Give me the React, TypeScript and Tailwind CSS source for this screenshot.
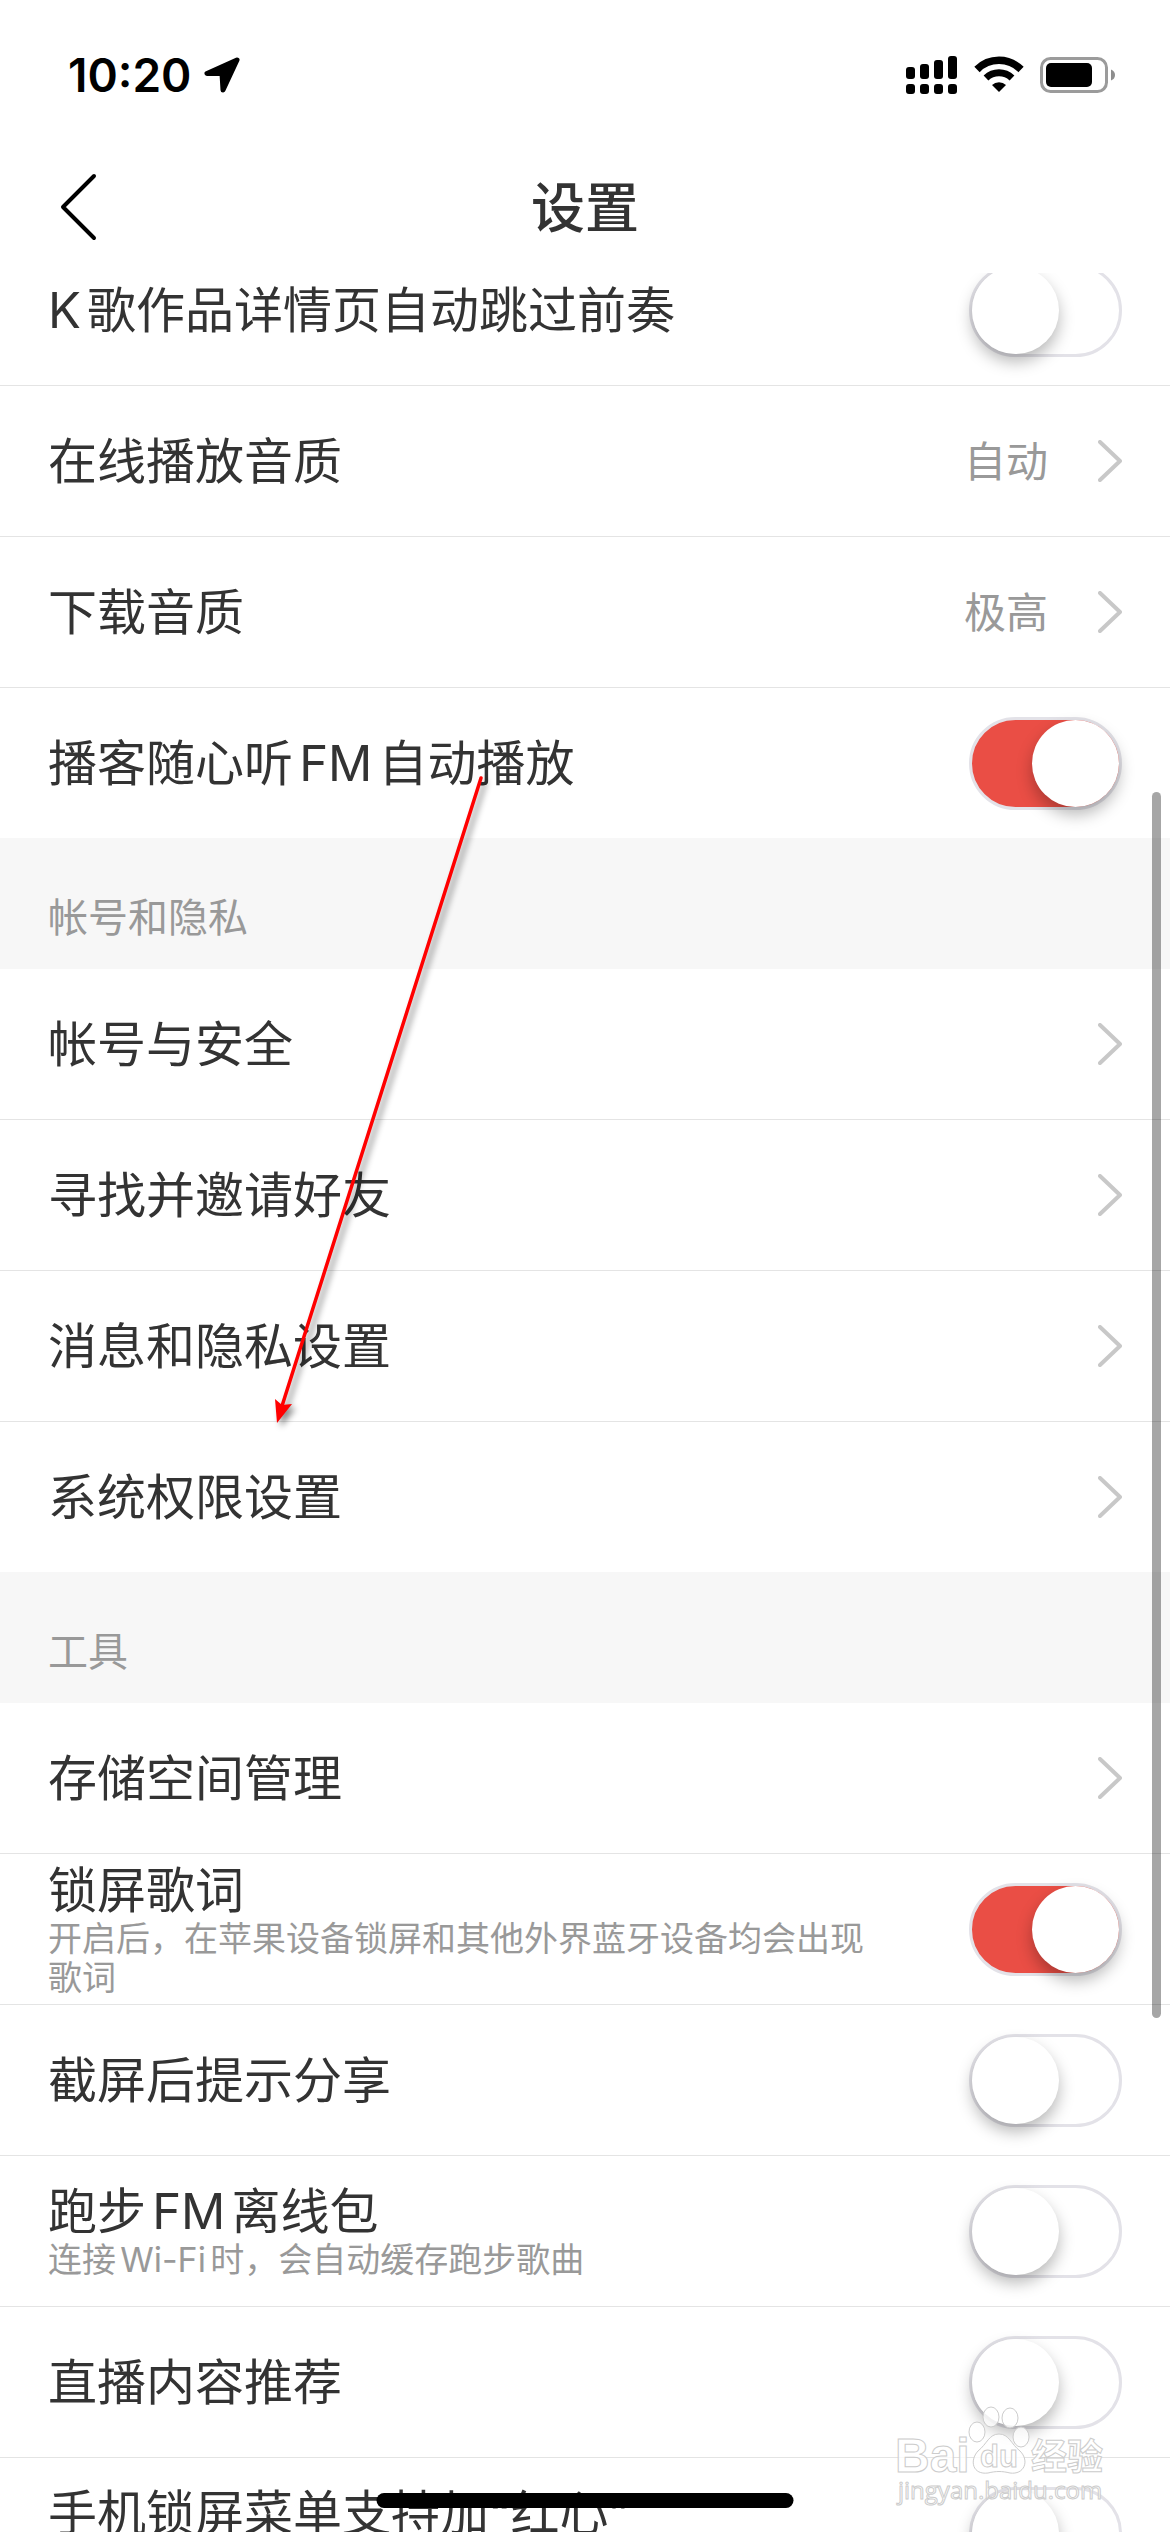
import React, { useState } from 'react';

interface SettingItem {
    id: string;
    label: string;
    kind: 'link' | 'switch';
    value?: string;
    hint?: string;
    on?: boolean;
}

interface SettingSection {
    id: string;
    title?: string;
    items: SettingItem[];
}

const SECTIONS: SettingSection[] = [
    {
        id: 'playback',
        items: [
            { id: 'skip-intro', label: 'K歌作品详情页自动跳过前奏', kind: 'switch' },
            { id: 'online-quality', label: '在线播放音质', kind: 'link', value: '自动' },
            { id: 'download-quality', label: '下载音质', kind: 'link', value: '极高' },
            { id: 'podcast-fm', label: '播客随心听FM自动播放', kind: 'switch', on: true },
        ],
    },
    {
        id: 'privacy',
        title: '帐号和隐私',
        items: [
            { id: 'account', label: '帐号与安全', kind: 'link' },
            { id: 'friends', label: '寻找并邀请好友', kind: 'link' },
            { id: 'messages', label: '消息和隐私设置', kind: 'link' },
            { id: 'permissions', label: '系统权限设置', kind: 'link' },
        ],
    },
    {
        id: 'tools',
        title: '工具',
        items: [
            { id: 'storage', label: '存储空间管理', kind: 'link' },
            { id: 'lock-lyrics', label: '锁屏歌词', kind: 'switch', on: true, hint: '开启后，在苹果设备锁屏和其他外界蓝牙设备均会出现歌词' },
            { id: 'screenshot', label: '截屏后提示分享', kind: 'switch' },
            { id: 'running-fm', label: '跑步FM离线包', kind: 'switch', hint: '连接Wi-Fi时，会自动缓存跑步歌曲' },
            { id: 'live', label: '直播内容推荐', kind: 'switch' },
            { id: 'lock-menu', label: '手机锁屏菜单支持加“红心”', kind: 'switch', hint: '' },
        ],
    },
];

const StatusBar: React.FC = () => (
    <div className="flex h-[141px] items-center justify-between pt-2 pl-[68px] pr-[54px] text-black">
        <div className="flex items-center gap-3">
            <span className="text-[46px] leading-none font-semibold">10:20</span>
            <svg width="38" height="38" viewBox="0 0 38 38" fill="currentColor">
                <path d="M34 4 L4 17.500 L19 17.500 L20 34 Z" stroke="currentColor" strokeWidth="5" strokeLinejoin="round" />
            </svg>
        </div>
        <div className="flex items-center gap-4">
            <svg width="52" height="40" viewBox="0 0 52 40" fill="currentColor">
                <rect x="0" y="12" width="9" height="12" rx="3" />
                <rect x="14" y="9" width="9" height="15" rx="3" />
                <rect x="28" y="5" width="9" height="19" rx="3" />
                <rect x="42" y="1" width="9" height="23" rx="3" />
                <rect x="0" y="29" width="9" height="10" rx="3" />
                <rect x="14" y="29" width="9" height="10" rx="3" />
                <rect x="28" y="29" width="9" height="10" rx="3" />
                <rect x="42" y="29" width="9" height="10" rx="3" />
            </svg>
            <svg width="50" height="40" viewBox="0 0 50 40">
                <path d="M3 14.500 A31 31 0 0 1 47 14.500" fill="none" stroke="currentColor" strokeWidth="7.500" />
                <path d="M12 23 A19 19 0 0 1 38 23" fill="none" stroke="currentColor" strokeWidth="7" />
                <path d="M25 37 L18 30 A10 10 0 0 1 32 30 Z" fill="currentColor" />
            </svg>
            <svg width="76" height="36" viewBox="0 0 76 36">
                <rect x="1.500" y="1.500" width="65" height="33" rx="9" fill="none" stroke="#9b9b9b" strokeWidth="3" />
                <rect x="6" y="6" width="46" height="24" rx="5" fill="currentColor" />
                <path d="M71 12.500 Q75 14 75 18 Q75 22 71 23.500 Z" fill="#8e8e8e" />
            </svg>
        </div>
    </div>
);

const NavBar: React.FC = () => (
    <div className="relative flex h-[132px] items-center justify-center">
        <button aria-label="返回" className="absolute left-[58px] text-black">
            <svg width="40" height="68" viewBox="0 0 40 68" fill="none" stroke="currentColor" strokeWidth="4" strokeLinecap="round" strokeLinejoin="round">
                <path d="M36 3 L5 34 L36 65" />
            </svg>
        </button>
        <h1 className="pt-1 text-[54px] leading-none font-medium text-[#333333]">设置</h1>
    </div>
);

const Chevron: React.FC = () => (
    <svg width="24" height="42" viewBox="0 0 24 42" fill="none" stroke="#c8c8c8" strokeWidth="4" strokeLinecap="round" strokeLinejoin="round">
        <path d="M2 2 L22 21 L2 40" />
    </svg>
);

const rowClass = 'flex w-full h-[151px] items-center justify-between border-b border-[#e4e4e4] px-12 text-left last:h-[150px] last:border-b-0';

const SettingRow: React.FC<{ item: SettingItem }> = ({ item }) => {
    const [checked, setChecked] = useState(!!item.on);

    if (item.kind === 'link') {
        return (
            <button className={rowClass}>
                <span className="text-[49px] leading-[57px]">{item.label}</span>
                <span className="flex items-center gap-[50px]">
                    {item.value && <span className="text-[42px] leading-[57px] text-[#999999]">{item.value}</span>}
                    <Chevron />
                </span>
            </button>
        );
    }

    return (
        <label htmlFor={item.id} className={rowClass}>
            <span className="flex flex-1 flex-col pr-24">
                <span className="text-[49px] leading-[57px]">{item.label}</span>
                {item.hint !== undefined && (
                    <span className="min-h-[39px] text-[34px] leading-[39px] text-[#999999]">{item.hint}</span>
                )}
            </span>
            <input
                id={item.id}
                type="checkbox"
                role="switch"
                checked={checked}
                onChange={(e) => setChecked(e.target.checked)}
                className="h-[93px] w-[153px] shrink-0 appearance-none rounded-full border-[3px] border-[#e3e2e8] bg-white before:block before:size-[87px] before:rounded-full before:bg-white before:shadow-[0_8px_16px_rgba(0,0,0,0.28)] before:content-[''] checked:bg-[#ea4e45] checked:before:ml-[60px]"
            />
        </label>
    );
};

const GuideArrow: React.FC = () => (
    <svg className="pointer-events-none absolute left-[260px] top-[770px] drop-shadow-[4px_4px_3px_rgba(0,0,0,0.45)]" width="240" height="670" viewBox="260 770 240 670">
        <path d="M481 778 L282 1406" stroke="#ff0000" strokeWidth="3.500" strokeLinecap="round" />
        <path d="M277 1423 L275 1399 L282 1405 L292 1404 Z" fill="#ff0000" />
    </svg>
);

const Watermark: React.FC = () => (
    <svg className="pointer-events-none absolute right-[60px] bottom-[20px]" width="220" height="112" viewBox="0 0 220 112" fill="#ffffff" fillOpacity="0.8" stroke="#cccccc" strokeWidth="1">
        <ellipse cx="87" cy="32" rx="8" ry="10" />
        <ellipse cx="101" cy="17" rx="8" ry="10" />
        <ellipse cx="120" cy="18" rx="8" ry="10" />
        <ellipse cx="131" cy="37" rx="8" ry="10" />
        <path d="M109 34 C119 34 121 44 130 51 C140 61 134 75 120 73 C112 71 106 71 98 73 C83 75 79 61 88 51 C97 44 99 34 109 34 Z" />
        <text x="5" y="72" fontSize="48" fontWeight="700" fontFamily="Liberation Sans, sans-serif">Bai</text>
        <text x="90" y="67" fontSize="31" fontWeight="700" fontFamily="Liberation Sans, sans-serif">du</text>
        <text x="141" y="70" fontSize="36" fontWeight="700" fontFamily="Noto Sans CJK SC, sans-serif">经验</text>
        <text x="8" y="99" fontSize="24" fontWeight="500" fontFamily="Open Sans, sans-serif">jingyan.baidu.com</text>
    </svg>
);

const App: React.FC = () => {
    return (
        <div className="relative flex h-screen flex-col overflow-hidden bg-white font-['Inter','Noto_Sans_CJK_SC',sans-serif] text-[#333333] [text-autospace:normal]">
            <header className="shrink-0">
                <StatusBar />
                <NavBar />
            </header>

            <main className="min-h-0 flex-1 overflow-hidden">
                {/* list is scrolled a little, so the first row slides under the header */}
                <div className="-mt-[38px]">
                    {SECTIONS.map(section => (
                        <section key={section.id}>
                            {section.title && (
                                <h2 className="bg-[#f7f7f7] px-12 pt-[54px] pb-[25px] text-[40px] leading-[52px] text-[#999999]">{section.title}</h2>
                            )}
                            <div>
                                {section.items.map(item => (
                                    <SettingRow key={item.id} item={item} />
                                ))}
                            </div>
                        </section>
                    ))}
                </div>
            </main>

            <div className="absolute top-[792px] right-[9px] h-[1226px] w-[9px] rounded-full bg-black/35" />
            <GuideArrow />
            <Watermark />
            <div className="absolute bottom-6 left-1/2 h-[15px] w-[417px] -translate-x-1/2 rounded-full bg-black" />
        </div>
    );
};

export default App;
